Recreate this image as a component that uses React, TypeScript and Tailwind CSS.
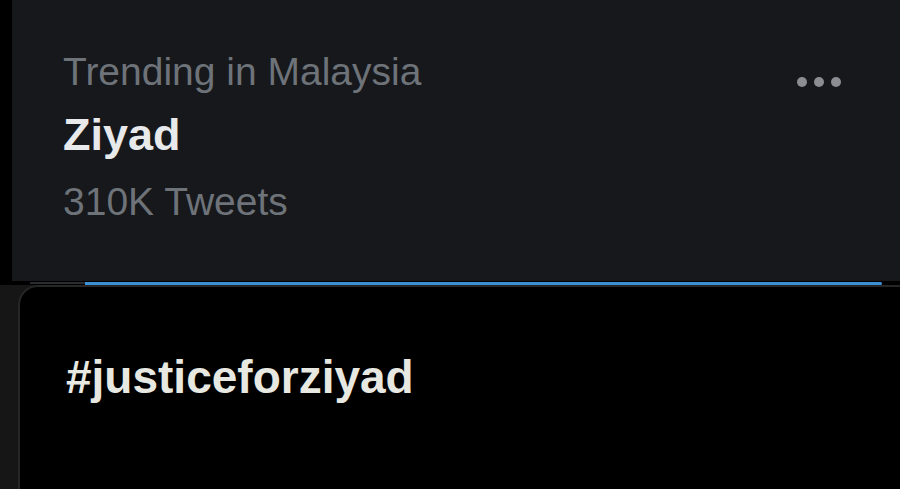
export default function App() {
  const sans = { fontFamily: '"Liberation Sans", Arial, sans-serif' };
  return (
    <div className="w-[900px] h-[489px] bg-black flex flex-col overflow-hidden" style={sans}>
      <div className="h-[281px] flex">
        <div className="w-[12px] bg-black" />
        <div className="flex-1 bg-[#16181c] flex justify-between">
          <div className="pl-[51px] pt-[49px] flex flex-col">
            <div className="text-[39px] leading-[46px] text-[#6e7379]">Trending in Malaysia</div>
            <div className="mt-[14px] text-[45px] leading-[52px] font-bold text-[#e7e9ea]">Ziyad</div>
            <div className="mt-[18px] text-[39px] leading-[46px] text-[#6e7379]">310K Tweets</div>
          </div>
          <div className="pr-[59px] pt-[77px] flex gap-[7px] h-fit">
            <div className="w-[10px] h-[10px] rounded-full bg-[#8a8d92]" />
            <div className="w-[10px] h-[10px] rounded-full bg-[#8a8d92]" />
            <div className="w-[10px] h-[10px] rounded-full bg-[#8a8d92]" />
          </div>
        </div>
      </div>
      <div className="h-[4px] flex bg-black">
        <div className="w-[30px]" />
        <div className="w-[55px] h-[2px] mt-[1px] bg-[#2a2c30]" />
        <div className="flex-1 h-[3px] mt-[1px] bg-[#3b8fd3] rounded-r-full" />
        <div className="w-[18px]" />
      </div>
      <div className="flex-1 flex bg-[#161616]">
        <div className="w-[18px]" />
        <div className="flex-1 bg-black rounded-tl-[20px] border-t-2 border-l-2 border-[#262626] pl-[46px] pt-[63px]">
          <div className="text-[46px] leading-[54px] font-bold text-[#e8e8e2]">#justiceforziyad</div>
        </div>
      </div>
    </div>
  );
}
